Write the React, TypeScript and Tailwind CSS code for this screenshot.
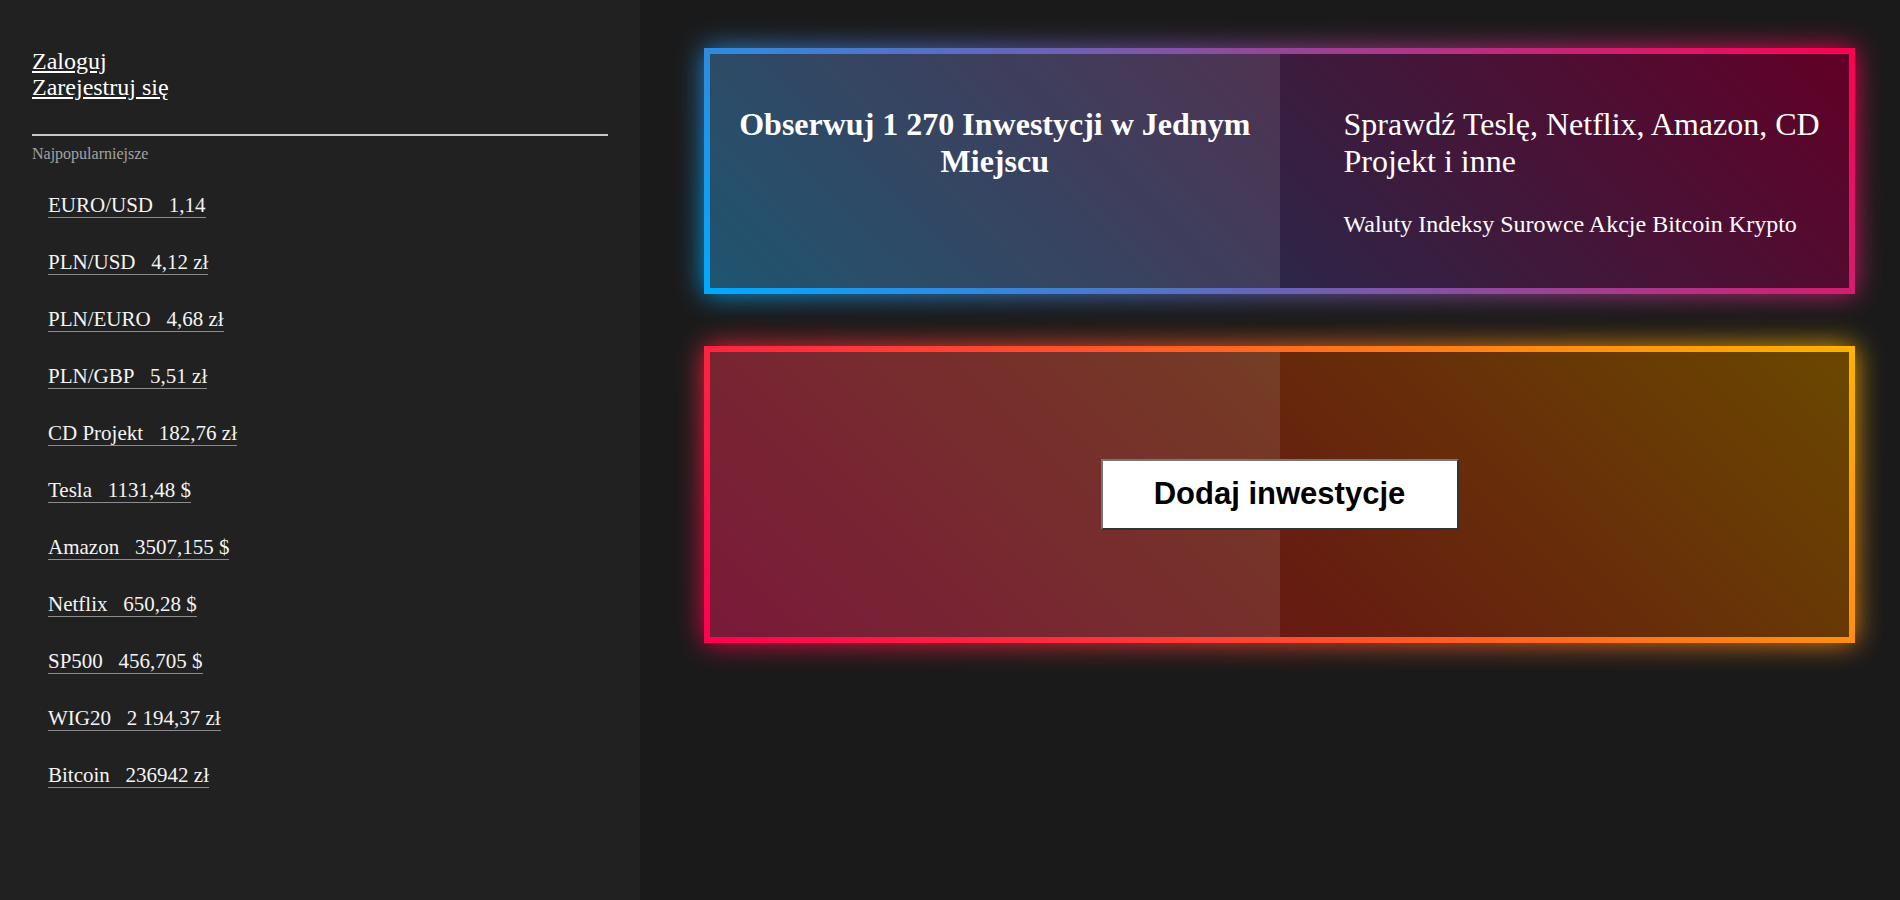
const items: [string, string][] = [
  ["EURO/USD", "1,14"],
  ["PLN/USD", "4,12 zł"],
  ["PLN/EURO", "4,68 zł"],
  ["PLN/GBP", "5,51 zł"],
  ["CD Projekt", "182,76 zł"],
  ["Tesla", "1131,48 $"],
  ["Amazon", "3507,155 $"],
  ["Netflix", "650,28 $"],
  ["SP500", "456,705 $"],
  ["WIG20", "2 194,37 zł"],
  ["Bitcoin", "236942 zł"],
];

const Sidebar = () => {
  return (
    <aside className="w-[640px] shrink-0 bg-[#212121] px-8 pt-[48px]">
      <div className="flex flex-col text-[24px] leading-[26px]">
        <a href="#" className="self-start text-white underline underline-offset-[2px]">
          Zaloguj
        </a>
        <a href="#" className="self-start text-white underline underline-offset-[2px]">
          Zarejestruj się
        </a>
      </div>
      <div className="mt-[34px] h-[2px] w-full bg-[#c8c8c8]" />
      <p className="mt-[9px] text-[16px] leading-[18px] text-[#a3a3a3]">
        Najpopularniejsze
      </p>
      <ul className="mt-[30px] flex flex-col gap-[33px] pl-4">
        {items.map(([name, value]) => (
          <li key={name} className="text-[21px] leading-[24px]">
            <a href="#" className="border-b border-[#8c8c8c] text-[#f4f4f4]">
              {name}
              {"\u00a0\u00a0\u00a0"}
              {value}
            </a>
          </li>
        ))}
      </ul>
    </aside>
  );
};

const InfoCard = () => {
  return (
    <div className="relative h-[246px] w-[1151px]">
      <div className="absolute inset-0 bg-[linear-gradient(45deg,#00aaff,#ff0050)] opacity-90 blur-[14px]" />
      <div className="relative h-full bg-[linear-gradient(45deg,#00aaff,#ff0050)] p-[6px]">
        <div className="grid h-full grid-cols-2 bg-[linear-gradient(45deg,#064260,#620026)]">
          <div className="bg-white/10 px-4 pt-[52px] text-center">
            <h1 className="text-[32px] font-bold leading-[37px] text-white">
              Obserwuj 1 270 Inwestycji w Jednym Miejscu
            </h1>
          </div>
          <div className="pl-16 pr-2 pt-[52px] text-white">
            <h2 className="text-[32px] leading-[37px]">
              Sprawdź Teslę, Netflix, Amazon, CD Projekt i inne
            </h2>
            <p className="mt-[31px] text-[24px] leading-[27px]">
              Waluty Indeksy Surowce Akcje Bitcoin Krypto
            </p>
          </div>
        </div>
      </div>
    </div>
  );
};

const AddCard = () => {
  return (
    <div className="relative h-[297px] w-[1151px]">
      <div className="absolute inset-0 bg-[linear-gradient(45deg,#ff0050,#ffb300)] opacity-90 blur-[14px]" />
      <div className="relative h-full bg-[linear-gradient(45deg,#ff0050,#ffb300)] p-[6px]">
        <div className="relative grid h-full grid-cols-2 bg-[linear-gradient(45deg,#6b0024,#66200f,#6a4800)]">
          <div className="bg-white/10" />
          <div />
          <div className="absolute inset-0 flex items-center justify-center">
            <button className="h-[71px] w-[358px] border-2 border-b-[#333] border-l-[#777] border-r-[#333] border-t-[#777] bg-white font-['Liberation_Sans',Arial,sans-serif] text-[31px] font-bold text-black">
              Dodaj inwestycje
            </button>
          </div>
        </div>
      </div>
    </div>
  );
};

export default function App() {
  return (
    <div className="flex h-[900px] w-full bg-[#1a1a1a] font-['Liberation_Serif','Times_New_Roman',serif]">
      <Sidebar />
      <main className="flex flex-1 flex-col gap-[52px] pl-[64px] pt-[48px]">
        <InfoCard />
        <AddCard />
      </main>
    </div>
  );
}
